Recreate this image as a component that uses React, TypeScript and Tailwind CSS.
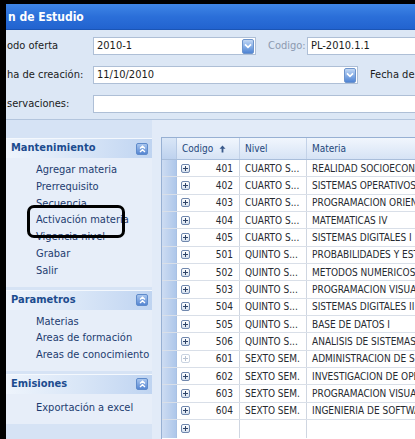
import React from 'react';

const font = "font-['DejaVu_Sans_Condensed','Liberation_Sans',sans-serif]";

const materias: [number, string, string, boolean?][] = [
  [401, 'CUARTO S...', 'REALIDAD SOCIOECONOMICA'],
  [402, 'CUARTO S...', 'SISTEMAS OPERATIVOS'],
  [403, 'CUARTO S...', 'PROGRAMACION ORIENTADA A OBJETOS'],
  [404, 'CUARTO S...', 'MATEMATICAS IV'],
  [405, 'CUARTO S...', 'SISTEMAS DIGITALES I'],
  [501, 'QUINTO S...', 'PROBABILIDADES Y ESTADISTICA'],
  [502, 'QUINTO S...', 'METODOS NUMERICOS'],
  [503, 'QUINTO S...', 'PROGRAMACION VISUAL I'],
  [504, 'QUINTO S...', 'SISTEMAS DIGITALES II'],
  [505, 'QUINTO S...', 'BASE DE DATOS I'],
  [506, 'QUINTO S...', 'ANALISIS DE SISTEMAS'],
  [601, 'SEXTO SEM.', 'ADMINISTRACION DE SISTEMAS', true],
  [602, 'SEXTO SEM.', 'INVESTIGACION DE OPERACIONES'],
  [603, 'SEXTO SEM.', 'PROGRAMACION VISUAL II'],
  [604, 'SEXTO SEM.', 'INGENIERIA DE SOFTWARE'],
];

const grupos = [
  {
    titulo: 'Mantenimiento',
    items: ['Agregar materia', 'Prerrequisito', 'Secuencia', 'Activación materia', 'Vigencia nivel', 'Grabar', 'Salir'],
  },
  { titulo: 'Parametros', items: ['Materias', 'Areas de formación', 'Areas de conocimiento'] },
  { titulo: 'Emisiones', items: ['Exportación a excel'] },
];

function DropButton() {
  return (
    <span className="flex h-[15px] w-[12px] shrink-0 items-center justify-center rounded-[2px] border border-[#6d94cc] bg-gradient-to-b from-[#c3d8f4] via-[#86aee6] to-[#4f84d4]">
      <svg width="8" height="6" viewBox="0 0 8 6">
        <path d="M1 1.3 L4 4.3 L7 1.3" stroke="#fff" strokeWidth="1.7" fill="none" />
      </svg>
    </span>
  );
}

function CollapseButton() {
  return (
    <span className="flex h-[12px] w-[12px] items-center justify-center rounded-[2px] border border-[#5f8bcb] bg-gradient-to-b from-[#a9c6ee] to-[#5686d2]">
      <svg width="7" height="8" viewBox="0 0 7 8">
        <path d="M1 3.5 L3.5 1.2 L6 3.5 M1 7 L3.5 4.7 L6 7" stroke="#fff" strokeWidth="1.3" fill="none" />
      </svg>
    </span>
  );
}

function ExpandIcon({ off }: { off?: boolean }) {
  return (
    <span
      className={`flex h-[9px] w-[9px] items-center justify-center rounded-[2px] border ${
        off ? 'border-[#c9d3e1] bg-white' : 'border-[#6f87ad] bg-gradient-to-b from-white to-[#d5e0ee]'
      }`}
    >
      <svg width="5" height="5" viewBox="0 0 5 5">
        <path d="M0 2.5 H5 M2.5 0 V5" stroke={off ? '#b7c2d2' : '#2f4468'} strokeWidth="1" />
      </svg>
    </span>
  );
}

function Campo({ className, children }: { className?: string; children?: React.ReactNode }) {
  return (
    <div className={`flex h-[18px] items-center justify-between border border-[#aebfd6] bg-white pl-[3px] pr-[1px] ${className ?? ''}`}>
      {children}
    </div>
  );
}

export default function App() {
  return (
    <div className={`relative h-[439px] w-[415px] overflow-hidden bg-black pt-[4px] text-[#1b1b1b] ${font}`}>
      <div className="flex h-[435px]">
        <div className="w-[6px] shrink-0" />
        <div className="flex min-w-0 flex-1 flex-col overflow-hidden whitespace-nowrap">
          {/* barra de título */}
          <div className="flex h-[26px] shrink-0 items-center border-b border-[#1b55b5] bg-gradient-to-b from-[#3f86e6] via-[#2b6fd9] to-[#2263cf] pl-[2px] text-[12px] font-bold text-white">
            n de Estudio
          </div>

          {/* cabecera del plan */}
          <div className="flex shrink-0 flex-col gap-[11px] border-b border-[#b3c5dd] bg-[#dce7f5] pt-[7px] pb-[6px] text-[11px]">
            <div className="flex items-center">
              <span className="w-[87px] shrink-0 pl-[1px]">odo oferta</span>
              <Campo className="w-[163px] shrink-0">
                <span>2010-1</span>
                <DropButton />
              </Campo>
              <span className="ml-[12px] w-[39px] shrink-0 text-[#8c9ab0]">Codigo:</span>
              <Campo className="w-[160px] shrink-0">
                <span>PL-2010.1.1</span>
              </Campo>
            </div>
            <div className="flex items-center">
              <span className="w-[87px] shrink-0 pl-[1px]">ha de creación:</span>
              <Campo className="w-[265px] shrink-0">
                <span>11/10/2010</span>
                <DropButton />
              </Campo>
              <span className="ml-[12px] shrink-0">Fecha de actualización</span>
            </div>
            <div className="flex items-center">
              <span className="w-[87px] shrink-0 pl-[1px]">servaciones:</span>
              <Campo className="w-[340px] shrink-0" />
            </div>
          </div>

          {/* menú lateral y grilla */}
          <div className="flex min-h-0 flex-1 bg-[#e2ebf8]">
            <div className="flex w-[146px] shrink-0 flex-col gap-[3px] bg-[#d6e3f5] pt-[18px]">
              {grupos.map((g, i) => (
                <div key={g.titulo} className="flex flex-col">
                  <div className="flex h-[20px] items-center justify-between border-t border-[#f4f8fd] bg-gradient-to-r from-[#eef4fc] via-[#d9e6f7] to-[#bfd4f1] pl-[5px] pr-[4px]">
                    <span className="text-[11px] font-bold text-[#1c4c8f]">{g.titulo}</span>
                    <CollapseButton />
                  </div>
                  <div
                    className={`flex flex-col bg-[#e7eef9] pb-[7px] pl-[30px] text-[11px] leading-[16.8px] text-[#1d3c70] ${
                      i === 2 ? 'pt-[6px]' : 'pt-[4px]'
                    }`}
                  >
                    {g.items.map((it) => (
                      <span key={it}>{it}</span>
                    ))}
                  </div>
                </div>
              ))}
            </div>

            <div className="ml-[9px] mt-[17px] flex min-w-0 flex-1 flex-col border-t border-l border-[#97b0d3] bg-white text-[10px]">
              <div className="flex h-[22px] shrink-0 border-b border-[#a9bedb] bg-gradient-to-b from-[#f1f6fd] to-[#d6e3f5] text-[#24487c]">
                <div className="w-[15px] shrink-0 border-r border-[#b6c9e4] bg-gradient-to-b from-[#d9e6f7] to-[#bed2ee]" />
                <div className="flex w-[63px] shrink-0 items-center gap-[6px] border-r border-[#c3d2e8] pl-[5px]">
                  <span>Codigo</span>
                  <svg width="7" height="8" viewBox="0 0 7 8">
                    <path d="M3.5 0.5 L6.5 3.8 H4.4 V7.5 H2.6 V3.8 H0.5 Z" fill="#39598a" />
                  </svg>
                </div>
                <div className="flex w-[67px] shrink-0 items-center border-r border-[#c3d2e8] pl-[5px]">Nivel</div>
                <div className="flex flex-1 items-center pl-[5px]">Materia</div>
              </div>

              {materias.map(([cod, nivel, nombre, off]) => (
                <div key={cod} className="flex h-[17.35px] shrink-0 border-b border-[#d9dfe8] text-[#262a30]">
                  <div className="w-[15px] shrink-0 border-r border-[#a9c1e4] bg-gradient-to-r from-[#cddcf2] to-[#aec7ea]" />
                  <div className="flex w-[63px] shrink-0 items-center justify-between border-r border-[#cfd6e1] pl-[4px] pr-[6px]">
                    <ExpandIcon off={off} />
                    <span>{cod}</span>
                  </div>
                  <div className="flex w-[67px] shrink-0 items-center border-r border-[#cfd6e1] pl-[5px]">{nivel}</div>
                  <div className="flex flex-1 items-center pl-[5px]">{nombre}</div>
                </div>
              ))}

              <div className="flex h-[17.35px] shrink-0">
                <div className="w-[15px] shrink-0 border-r border-[#a9c1e4] bg-gradient-to-r from-[#cddcf2] to-[#aec7ea]" />
                <div className="flex w-[63px] shrink-0 items-center border-r border-[#cfd6e1] pl-[4px]">
                  <ExpandIcon />
                </div>
                <div className="w-[67px] shrink-0 border-r border-[#cfd6e1]" />
              </div>
            </div>
          </div>
        </div>
      </div>

      {/* marco resaltando una opción */}
      <div className="pointer-events-none absolute left-[27px] top-[205px] h-[33px] w-[98px] rounded-[7px] border-[3px] border-black" />
    </div>
  );
}
